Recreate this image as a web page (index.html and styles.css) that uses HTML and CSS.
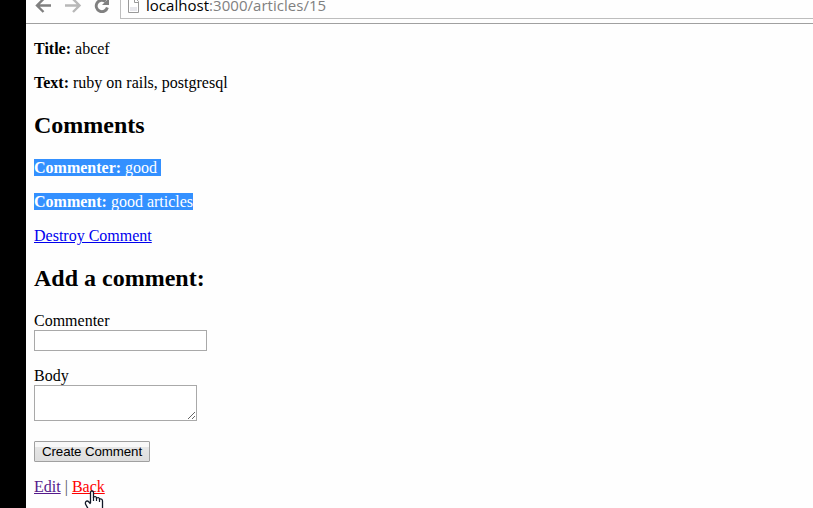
FILE: index.html
```html
<!DOCTYPE html>
<html lang="en">
<head>
<meta charset="utf-8">
<title>Article</title>
<link rel="stylesheet" href="styles.css">
</head>
<body>
<div class="window">
  <header class="toolbar">
    <svg class="nav" width="94" height="23" viewBox="0 0 94 23" fill="none" stroke-width="2.4">
      <path stroke="#808080" d="M25 5.500H12M17.500-1L11 5.500L17.500 12"/>
      <path stroke="#b8b8b8" d="M39 5.500H52M47-1L53.500 5.500L47 12"/>
      <path stroke="#808080" stroke-width="2.900" d="M79.500 1.500A5.700 5.700 0 1 0 81.400 7.500"/>
      <path fill="#808080" d="M83-2V5H76Z"/>
    </svg>
    <div class="address">
      <svg width="12" height="14" viewBox="0 0 12 14" fill="none">
        <path fill="#fff" stroke="#999" d="M.5-2.500H7L10.500 1.500V12.500H.5Z"/>
        <path stroke="#999" d="M6.500-2V2.500H10.500"/>
        <path fill="#e7e7ec" d="M2 7H9V11H2Z"/>
      </svg>
      <span class="url">localhost<span class="path">:3000/articles/15</span></span>
    </div>
  </header>
  <main>
    <p><strong>Title:</strong> abcef</p>
    <p><strong>Text:</strong> ruby on rails, postgresql</p>
    <h2>Comments</h2>
    <p><span class="selected trailing"><strong>Commenter:</strong> good</span></p>
    <p><span class="selected"><strong>Comment:</strong> good articles</span></p>
    <p><a class="link" href="#">Destroy Comment</a></p>
    <h2>Add a comment:</h2>
    <form>
      <div class="field author"><label for="commenter">Commenter</label><input id="commenter" type="text"></div>
      <div class="field body"><label for="body">Body</label><textarea id="body"></textarea></div>
      <button type="button">Create Comment</button>
    </form>
    <p class="links"><a class="visited" href="#">Edit</a> | <a class="active" href="#">Back<svg class="cursor" width="20" height="24" viewBox="0 0 20 24"><path fill="#fff" stroke="#111827" stroke-width="1.300" d="M6.500 13V2.500Q6.500 1 8 1T9.500 2.500V7Q12.500 6 12.500 8Q15.500 7 15.500 9Q18.500 8.500 18.500 11V18L16.500 24H7L1.500 14Q1 11 3.500 11Q4.500 11 6.500 14"/><path fill="none" stroke="#111827" stroke-width="1.200" d="M9.500 7V11M12.500 8V11M15.500 9V12"/></svg></a></p>
  </main>
</div>
</body>
</html>
```
FILE: styles.css
```css
* { box-sizing: border-box; }
body {
  margin: 0;
  height: 508px;
  overflow: hidden;
  padding-left: 26px;
  background: #000;
  color: #000;
  font: 16px/18px "Liberation Serif", serif;
}
.window { height: 508px; background: #fefefe; overflow: hidden; }
.toolbar { height: 24px; display: flex; border-bottom: 1px solid #a0a0a0; }
.nav { flex: none; }
.address {
  flex: 1;
  height: 19px;
  display: flex;
  padding-left: 7px;
  border: solid #bdbdbd;
  border-width: 0 0 1px 1px;
}
.url {
  margin-left: 6px;
  font: 15px/10px "Open Sans", sans-serif;
  letter-spacing: 0.03px;
  white-space: nowrap;
}
.path { color: #808080; }
main { padding: 16px 8px 0; }
p { margin: 0 0 16px; }
h2 { margin: 20px 0; font-size: 24px; line-height: 27px; }
.selected {
  display: inline-block;
  height: 17px;
  vertical-align: top;
  background: #3390ff;
  color: #fff;
}
.trailing { padding-right: 4px; }
.link { color: #0000ee; }
.visited { color: #551a8b; }
.active { color: #f00; position: relative; }
.field { display: flex; flex-direction: column; align-items: flex-start; }
.author { margin-bottom: 16px; }
.body { margin-bottom: 20px; }
input, textarea { margin: 0; border: 1px solid #a9a9a9; background: #fff; }
input { width: 173px; height: 21px; }
textarea { width: 163px; height: 36px; }
button {
  display: block;
  width: 116px;
  height: 21px;
  padding: 0;
  border: 1px solid #a0a0a0;
  border-radius: 1px;
  background: linear-gradient(#f8f8f8 0 5px, #e6e6e6 5px, #dedede);
  color: #000;
  font: 13.33px/19px "Liberation Sans", sans-serif;
  letter-spacing: -0.1px;
}
.links { margin-top: 16px; color: #555; }
.cursor { position: absolute; left: 12px; top: 12px; }
```
